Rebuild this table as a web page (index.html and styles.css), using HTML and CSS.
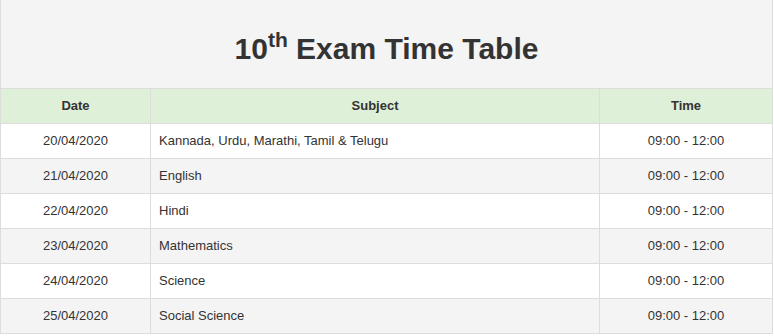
FILE: index.html
```html
<!DOCTYPE html>
<html>
<head>
<meta charset="utf-8">
<link rel="stylesheet" href="styles.css">
</head>
<body>
<table class="tt">
  <colgroup>
    <col class="c-date">
    <col class="c-subj">
    <col class="c-time">
  </colgroup>
  <thead>
    <tr><th colspan="3" class="title">10<sup>th</sup> Exam Time Table</th></tr>
    <tr class="head"><th>Date</th><th>Subject</th><th>Time</th></tr>
  </thead>
  <tbody>
    <tr><td class="ctr">20/04/2020</td><td>Kannada, Urdu, Marathi, Tamil &amp; Telugu</td><td class="ctr">09:00 - 12:00</td></tr>
    <tr><td class="ctr">21/04/2020</td><td>English</td><td class="ctr">09:00 - 12:00</td></tr>
    <tr><td class="ctr">22/04/2020</td><td>Hindi</td><td class="ctr">09:00 - 12:00</td></tr>
    <tr><td class="ctr">23/04/2020</td><td>Mathematics</td><td class="ctr">09:00 - 12:00</td></tr>
    <tr><td class="ctr">24/04/2020</td><td>Science</td><td class="ctr">09:00 - 12:00</td></tr>
    <tr><td class="ctr">25/04/2020</td><td>Social Science</td><td class="ctr">09:00 - 12:00</td></tr>
  </tbody>
</table>
</body>
</html>
```
FILE: styles.css
```css
html, body {
  margin: 0;
  padding: 0;
  background: #fff;
}
.tt {
  border-collapse: collapse;
  width: 772px;
  table-layout: fixed;
  font-family: "Liberation Sans", Arial, sans-serif;
  font-size: 13px;
  color: #333;
}
.tt th, .tt td {
  border: 1px solid #ddd;
  height: 34px;
  padding: 0 8px;
  line-height: 18px;
}
.tt td { text-align: left; }
.tt td.ctr { text-align: center; }
.title {
  background: #f4f4f4;
  height: 79px !important;
  font-size: 30px;
  font-weight: bold;
  color: #333;
  text-align: center;
  border-top: none !important;
  padding-top: 9px !important;
  line-height: 34px !important;
}
.title sup {
  font-size: 21px;
  line-height: 0;
  position: relative;
  top: -1px;
}
.head th {
  background: #dff0d8;
  font-weight: bold;
  text-align: center;
}
.c-date { width: 150px; }
.c-subj { width: 449px; }
.c-time { width: 173px; }
.tt tbody tr:nth-child(even) td { background: #f4f4f4; }
```
